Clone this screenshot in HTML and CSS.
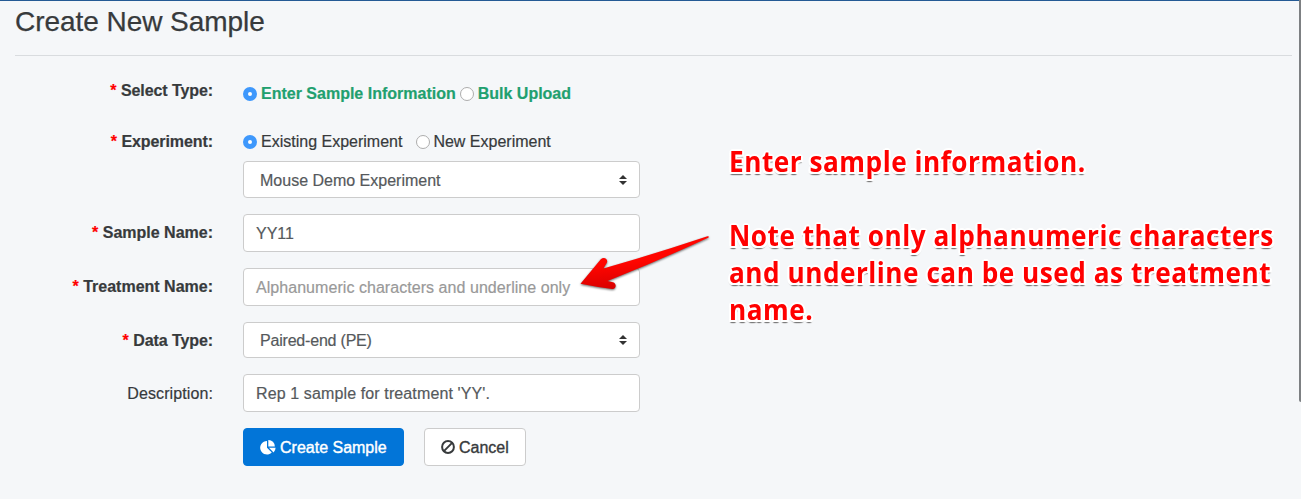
FILE: index.html
```html
<!DOCTYPE html>
<html lang="en">
<head>
<meta charset="utf-8">
<title>Create New Sample</title>
<link rel="stylesheet" href="styles.css">
</head>
<body>
<header class="page-head"><h1 class="page-title">Create New Sample</h1></header>
<main class="content">
  <form class="sample-form">
    <div class="row row-type">
      <div class="label"><span class="star">*</span> <span class="t-select">Select Type:</span></div>
      <div class="radios green">
        <i class="radio on"></i><span class="t-enter">Enter Sample Information</span>
        <i class="radio gap-bulk"></i><span class="t-bulk">Bulk Upload</span>
      </div>
    </div>
    <div class="row row-exp">
      <div class="label"><span class="star">*</span> <span class="t-exp">Experiment:</span></div>
      <div class="stack">
        <div class="radios">
          <i class="radio on"></i><span class="t-existing">Existing Experiment</span>
          <i class="radio gap-new"></i><span class="t-new">New Experiment</span>
        </div>
        <div class="control select select-exp"><span class="t-mouse">Mouse Demo Experiment</span>
          <svg class="arrows" viewBox="0 0 8 10"><path d="M4 0 8 4H0zM4 10 0 6H8z"/></svg></div>
      </div>
    </div>
    <div class="row">
      <div class="label"><span class="star">*</span> <span class="t-sname">Sample Name:</span></div>
      <div class="control"><span class="t-yy">YY11</span></div>
    </div>
    <div class="row">
      <div class="label"><span class="star">*</span> <span class="t-tname">Treatment Name:</span></div>
      <div class="control placeholder"><span class="t-alpha">Alphanumeric characters and underline only</span></div>
    </div>
    <div class="row">
      <div class="label"><span class="star">*</span> <span class="t-dtype">Data Type:</span></div>
      <div class="control select"><span class="t-paired">Paired-end (PE)</span>
        <svg class="arrows" viewBox="0 0 8 10"><path d="M4 0 8 4H0zM4 10 0 6H8z"/></svg></div>
    </div>
    <div class="row">
      <div class="label plain"><span class="t-desc">Description:</span></div>
      <div class="control"><span class="t-rep">Rep 1 sample for treatment 'YY'.</span></div>
    </div>
    <div class="actions">
      <button type="button" class="btn primary">
        <svg class="pie" viewBox="0 0 16 15"><path d="M7 .9V7.7L11.8 12.5A6.8 6.8 0 1 1 7 .9z"/><path d="M8.3 0A6.4 6.4 0 0 1 14.8 6.5H8.3z"/><path d="M9 7.8H15.6A6.6 6.6 0 0 1 13.6 12.4z"/></svg><span class="t-create">Create Sample</span></button>
      <button type="button" class="btn cancel">
        <svg class="ban" viewBox="0 0 14 14"><circle cx="7" cy="7" r="5.9"/><path d="M2.9 11.1 11.1 2.9"/></svg><span class="t-cancel">Cancel</span></button>
    </div>
  </form>
  <aside class="notes">
    <p class="note n1">Enter sample information.</p>
    <p class="note n2">Note that only alphanumeric characters</p>
    <p class="note n3">and underline can be used as treatment</p>
    <p class="note n4">name.</p>
  </aside>
</main>
<svg class="pointer" viewBox="0 0 140 60">
  <defs>
    <linearGradient id="red" x1="0" y1="0" x2="0.25" y2="1"><stop offset="0.55" stop-color="#ff0500"/><stop offset="1" stop-color="#d80000"/></linearGradient>
  </defs>
  <path d="M4.5 48.8 24.8 24.2C28 21.2 32.2 24 31 27.4L27.4 33.6Q78 19 131.5 1.2Q134 1.4 132.2 2.8Q82 26 31.5 46L37 47.2C41 48.4 40.3 54.3 36.2 54Q20 52 4.5 48.8z"/>
</svg>
<div class="scrollbar"></div>
</body>
</html>
```
FILE: styles.css
```css
* { box-sizing: border-box; }
body { margin: 0; height: 499px; overflow: hidden; background: #f5f7f9; color: #373a3c; font: 16px/24px "Liberation Sans", Arial, sans-serif; border-top: 1px solid #245a95; }
.page-head { margin: 0 9px 0 15px; height: 55px; border-bottom: 1px solid #d9dcdf; }
.page-title { margin: 0; padding-top: 4px; font-size: 28px; line-height: 33px; font-weight: 400; letter-spacing: -.05px; white-space: nowrap; -webkit-text-stroke: .25px; }
.content { display: flex; padding: 22px 0 0 15px; }
.sample-form { display: flex; flex-direction: column; gap: 16px; width: 625px; flex: none; -webkit-text-stroke: .2px; }
.row { display: grid; grid-template-columns: 198px 397px; column-gap: 30px; }
.row-type { height: 36px; }
.label { padding-top: 7px; text-align: right; font-weight: 700; white-space: nowrap; }
.row-type .label { padding-top: 1px; }
.row-exp .label { padding-top: 0; }
.t-select, .t-exp, .t-dtype { letter-spacing: -.08px; }
.label.plain { font-weight: 400; padding-top: 8px; }
.t-desc { letter-spacing: .1px; }
.star { color: #f00; }
.radios { display: flex; align-items: center; height: 24px; white-space: nowrap; }
.row-type .radios { height: 32px; }
.green { color: #1fa06f; font-weight: 700; }
.radio { width: 14px; height: 14px; margin-right: 4px; border: 1px solid #adadad; border-radius: 50%; background: #fff; flex: none; }
.radio.on { border: 5px solid #3e98fc; }
.gap-bulk { margin-left: 4px; }
.gap-new { margin-left: 14px; }
.t-new { margin-left: -1px; }
.stack { display: flex; flex-direction: column; gap: 7px; }
.control { height: 38px; display: flex; align-items: center; background: #fff; border: 1px solid #ccc; border-radius: 4px; padding: 1px 12px 0; color: #55595c; white-space: nowrap; }
.control span { padding-top: 1px; }
.select { height: 36px; padding: 0 12px 0 16px; justify-content: space-between; }
.select span { padding-top: 2px; }
.select-exp { height: 37px; }
.placeholder { color: #999; }
.t-alpha { letter-spacing: .05px; }
.t-paired { letter-spacing: -.2px; }
.t-rep { letter-spacing: .12px; }
.arrows { width: 8px; height: 10px; fill: #333; }
.actions { display: flex; gap: 20px; padding-left: 228px; }
.btn { height: 38px; display: flex; align-items: center; border-radius: 4px; border: 1px solid #ccc; background: #fff; color: #373a3c; font: inherit; padding: 0 0 0 16px; white-space: nowrap; }
.btn span { padding-top: 2px; }
.primary { width: 161px; background: #0275d8; border-color: #0275d8; color: #fff; }
.primary span { -webkit-text-stroke: .4px #fff; }
.cancel { width: 102px; }
.cancel span { -webkit-text-stroke: .35px #373a3c; }
.pie { width: 16px; height: 15px; fill: #fff; margin-right: 4px; }
.ban { width: 14px; height: 14px; fill: none; stroke: #373a3c; stroke-width: 2; margin-right: 4px; }
.notes { margin: 65px 0 0 89px; color: #f00; font: 700 28px/37px "Open Sans", "Noto Sans", sans-serif; letter-spacing: .55px; transform: scaleX(.935); transform-origin: 0 0; }
.note { margin: 0; white-space: nowrap; text-shadow: -2px 0 #fff, 2px 0 #fff, 0 -2px #fff, 0 2px #fff, -1.5px -1.5px #fff, 1.5px -1.5px #fff, -1.5px 1.5px #fff, 1.5px 1.5px #fff, -2px 2px #fff, 2px 2px #fff, 0 3px 1px #777, -1px 3px 1px #aaa, 1px 3px 1px #aaa; }
.n1 { margin-bottom: 37px; }
.pointer { position: absolute; left: 576px; top: 235px; width: 140px; height: 60px; overflow: visible; fill: url(#red); filter: drop-shadow(0 1px 1px rgba(0,0,0,.6)); }
.scrollbar { position: absolute; right: 0; top: 0; width: 2px; height: 402px; background: #7d8083; border-bottom-left-radius: 2px; }
```
